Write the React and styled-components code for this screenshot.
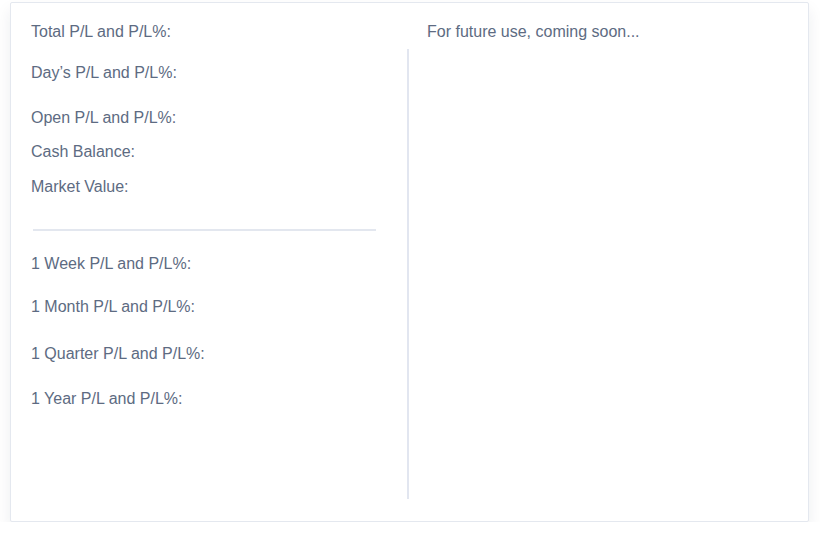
import React from "react";
import styled, { createGlobalStyle } from "styled-components";

const GlobalStyle = createGlobalStyle`
  body {
    margin: 0;
    background: #fff;
    font-family: "Liberation Sans", Arial, sans-serif;
  }
`;

const Page = styled.div`
  padding: 2px 11px 0 10px;
`;

const Card = styled.div`
  box-sizing: border-box;
  height: 520px;
  background: #fff;
  border: 1px solid #e4e8ef;
  border-radius: 2px;
  box-shadow: 0 8px 16px rgba(30, 40, 70, 0.08);
  display: grid;
  grid-template-columns: 396px 1fr;
  grid-template-rows: 29px 1fr;
  padding: 17px 0 22px;
`;

const HeadCell = styled.div`
  padding-left: 20px;
`;

const LeftBody = styled.div`
  padding: 12px 20px 0;
`;

const RightBody = styled.div`
  border-left: 2px solid #e2e6f0;
`;

const Label = styled.div`
  font-size: 16px;
  line-height: 24px;
  color: #5d6b82;
  margin-top: ${p => p.gap || 0}px;
`;

const Rule = styled.hr`
  border: none;
  border-top: 2px solid #e3e7ef;
  margin: 30px 0 0 2px;
  width: 343px;
`;

const top = [
  ["Day’s P/L and P/L%:", 0],
  ["Open P/L and P/L%:", 21],
  ["Cash Balance:", 10],
  ["Market Value:", 11],
];

const periods = [
  ["1 Week P/L and P/L%:", 21],
  ["1 Month P/L and P/L%:", 19],
  ["1 Quarter P/L and P/L%:", 23],
  ["1 Year P/L and P/L%:", 21],
];

export default function App() {
  return (
    <Page>
      <GlobalStyle />
      <Card>
        <HeadCell>
          <Label>Total P/L and P/L%:</Label>
        </HeadCell>
        <HeadCell>
          <Label>For future use, coming soon...</Label>
        </HeadCell>
        <LeftBody>
          {top.map(([text, gap]) => (
            <Label key={text} gap={gap}>{text}</Label>
          ))}
          <Rule />
          {periods.map(([text, gap]) => (
            <Label key={text} gap={gap}>{text}</Label>
          ))}
        </LeftBody>
        <RightBody />
      </Card>
    </Page>
  );
}
